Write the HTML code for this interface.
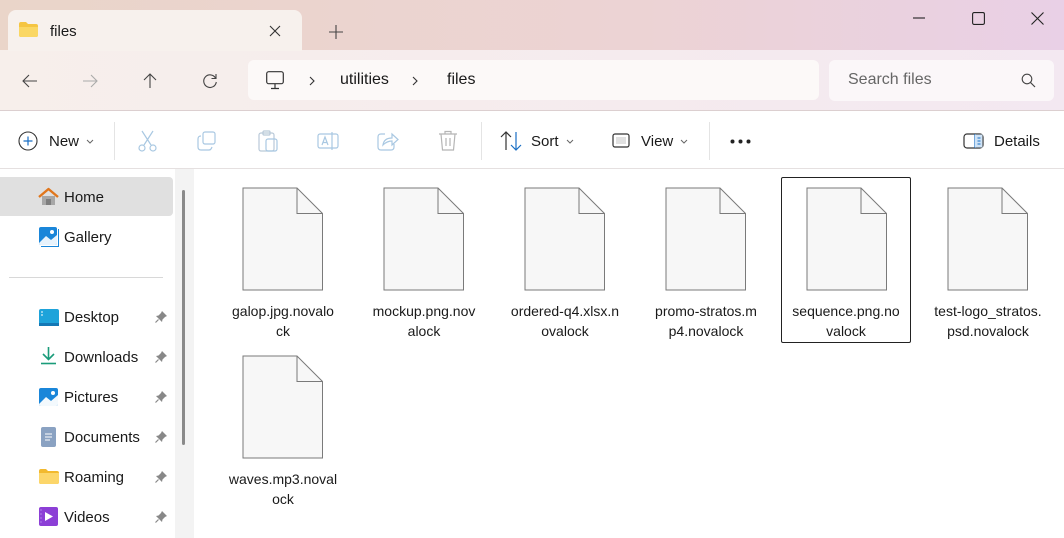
<!DOCTYPE html>
<html><head><meta charset="utf-8"><style>
*{margin:0;padding:0;box-sizing:border-box}
body{width:1064px;height:538px;overflow:hidden;font-family:"Segoe UI","Liberation Sans",sans-serif;position:relative;background:#fff;color:#1a1a1a}
.top{position:absolute;left:0;top:0;width:1064px;height:111px;background:linear-gradient(90deg,#ead5c9 0%,#ecd3d4 60%,#e9d0e6 100%)}
.addrrow{position:absolute;left:0;top:50px;width:1064px;height:61px;background:linear-gradient(90deg,#f7efeb 0%,#f5ebee 60%,#f3e8f1 100%);border-bottom:1px solid #dccfd0}
.tab{position:absolute;left:8px;top:10px;width:294px;height:41px;background:#f7f1ed;border-radius:8px 8px 0 0}
.abs{position:absolute}
.t{position:absolute;white-space:nowrap}
.toolbar{position:absolute;left:0;top:111px;width:1064px;height:58px;background:#fff;border-bottom:1px solid #e5e0e0}
.sep{position:absolute;top:122px;width:1px;height:38px;background:#e4e4e4}
.side{position:absolute;left:0;top:169px;width:175px;height:369px;background:#fff}
.sbar{position:absolute;left:175px;top:169px;width:19px;height:369px;background:#f3f3f3}
.item{position:absolute;width:130px;height:166px;text-align:center;font-size:14px;line-height:20px;color:#1a1a1a}
.item svg{position:absolute;left:24px;top:10px}
.item .lbl{position:absolute;top:124px;left:0;width:130px}
.nav{position:absolute;left:38px;font-size:15px;color:#1a1a1a}
.pin{position:absolute;left:155px;width:12px;height:12px}
</style></head><body>
<div class="top"></div>
<div class="addrrow"></div>
<div class="tab"></div>
<svg class="abs" style="left:19px;top:22px" width="19" height="15"><path d="M0 2 Q0 0 2 0 H7 L9 2 H17 Q19 2 19 4 V13 Q19 15 17 15 H2 Q0 15 0 13Z" fill="#f5c542"/><path d="M0 5 H19 V13 Q19 15 17 15 H2 Q0 15 0 13Z" fill="#fad764"/></svg>
<div class="t" style="left:50px;top:23px;font-size:15px">files</div>
<svg class="abs" style="left:269px;top:25px" width="12" height="12"><path d="M1 1L11 11M11 1L1 11" stroke="#333" stroke-width="1.1"/></svg>
<svg class="abs" style="left:329px;top:25px" width="14" height="14"><path d="M7 0V14M0 7H14" stroke="#444" stroke-width="1.1"/></svg>
<svg class="abs" style="left:913px;top:17px" width="12" height="2"><path d="M0 1H12" stroke="#222" stroke-width="1.1"/></svg>
<svg class="abs" style="left:972px;top:12px" width="13" height="13"><rect x="0.6" y="0.6" width="11.8" height="11.8" rx="1.5" fill="none" stroke="#222" stroke-width="1.1"/></svg>
<svg class="abs" style="left:1031px;top:12px" width="13" height="13"><path d="M0.5 0.5L12.5 12.5M12.5 0.5L0.5 12.5" stroke="#222" stroke-width="1.1"/></svg>
<svg class="abs" style="left:22px;top:73px" width="16" height="16"><path d="M15 8H1M7 2L1 8L7 14" stroke="#444" stroke-width="1.1" fill="none"/></svg>
<svg class="abs" style="left:82px;top:73px" width="16" height="16"><path d="M1 8H15M9 2L15 8L9 14" stroke="#aaa" stroke-width="1.1" fill="none"/></svg>
<svg class="abs" style="left:142px;top:73px" width="16" height="16"><path d="M8 15V1M2 7L8 1L14 7" stroke="#444" stroke-width="1.1" fill="none"/></svg>
<svg class="abs" style="left:202px;top:73px" width="16" height="16"><path d="M13.5 5A6.3 6.3 0 1 0 14.3 9" stroke="#444" stroke-width="1.1" fill="none"/><path d="M14 1V5.5H9.5" stroke="#444" stroke-width="1.1" fill="none"/></svg>
<div class="abs" style="left:248px;top:60px;width:571px;height:40px;background:#fcf9f8;border-radius:6px"></div>
<svg class="abs" style="left:266px;top:71px" width="18" height="19"><rect x="0.7" y="0.7" width="16.6" height="12" rx="2" fill="none" stroke="#333" stroke-width="1.2"/><path d="M9 13V17M5 17.5H13" stroke="#333" stroke-width="1.2"/></svg>
<svg class="abs" style="left:309px;top:76px" width="6" height="10"><path d="M1 1L5 5L1 9" stroke="#333" stroke-width="1.1" fill="none"/></svg>
<div class="t" style="left:340px;top:71px;font-size:16px">utilities</div>
<svg class="abs" style="left:412px;top:76px" width="6" height="10"><path d="M1 1L5 5L1 9" stroke="#333" stroke-width="1.1" fill="none"/></svg>
<div class="t" style="left:447px;top:71px;font-size:16px">files</div>
<div class="abs" style="left:829px;top:60px;width:225px;height:41px;background:#fbf7f9;border-radius:6px"></div>
<div class="t" style="left:848px;top:71px;font-size:16px;color:#666">Search files</div>
<svg class="abs" style="left:1021px;top:73px" width="15" height="15"><circle cx="6" cy="6" r="4.8" fill="none" stroke="#444" stroke-width="1.1"/><path d="M9.5 9.5L14 14" stroke="#444" stroke-width="1.2"/></svg>
<div class="toolbar"></div>
<svg class="abs" style="left:18px;top:131px" width="20" height="20"><circle cx="10" cy="10" r="9" fill="none" stroke="#333" stroke-width="1.1"/><path d="M10 5.5V14.5M5.5 10H14.5" stroke="#1a6fc4" stroke-width="1.2"/></svg>
<div class="t" style="left:49px;top:133px;font-size:15px">New</div>
<svg class="abs" style="left:86px;top:139px" width="8" height="5"><path d="M1 1L4 4L7 1" stroke="#666" fill="none"/></svg>
<div class="sep" style="left:114px"></div>
<svg class="abs" style="left:137px;top:130px" width="22" height="22" fill="none" stroke="#a9c8e2" stroke-width="1.2"><path d="M5 1L14 15M16 1L7 15"/><circle cx="5" cy="18" r="3"/><circle cx="16" cy="18" r="3"/></svg>
<svg class="abs" style="left:197px;top:131px" width="20" height="20" fill="none" stroke="#a9c8e2" stroke-width="1.2"><rect x="6" y="1" width="12" height="12" rx="2"/><path d="M4 5Q1 5 1 8V16Q1 19 4 19H12Q14 19 15 16"/></svg>
<svg class="abs" style="left:258px;top:130px" width="20" height="22" fill="none" stroke="#b9c9d8" stroke-width="1.2"><rect x="1" y="3" width="15" height="18" rx="2"/><rect x="5" y="1" width="7" height="4" rx="1"/><rect x="8" y="9" width="11" height="12" rx="2" stroke="#a9c8e2"/></svg>
<svg class="abs" style="left:317px;top:130px" width="22" height="22" fill="none" stroke="#a9c8e2" stroke-width="1.2"><rect x="1" y="4" width="20" height="14" rx="2"/><path d="M5 15L8 7L11 15M6 12.5H10M15 2V20"/></svg>
<svg class="abs" style="left:377px;top:131px" width="22" height="20" fill="none" stroke="#a9c8e2" stroke-width="1.2"><path d="M8 3H4Q1 3 1 6V16Q1 19 4 19H14Q17 19 17 16V13"/><path d="M6 14Q7 7 15 7V3L21 8.5L15 14V10Q10 10 6 14Z"/></svg>
<svg class="abs" style="left:438px;top:130px" width="20" height="22" fill="none" stroke="#b5b5b5" stroke-width="1.2"><path d="M1 4H19M7 4V1.5H13V4M3 4L4.5 20H15.5L17 4M8 8V16M12 8V16"/></svg>
<div class="sep" style="left:481px"></div>
<svg class="abs" style="left:500px;top:131px" width="22" height="20" fill="none" stroke-width="1.2"><path d="M6 19V1M1 6L6 1L11 6" stroke="#333"/><path d="M16 1V19M11 14L16 19L21 14" stroke="#1a6fc4"/></svg>
<div class="t" style="left:531px;top:133px;font-size:15px">Sort</div>
<svg class="abs" style="left:566px;top:139px" width="8" height="5"><path d="M1 1L4 4L7 1" stroke="#666" fill="none"/></svg>
<svg class="abs" style="left:612px;top:133px" width="18" height="16" fill="none" stroke="#333" stroke-width="1.2"><rect x="1" y="1" width="16" height="13" rx="2"/><rect x="4" y="4" width="10" height="7" fill="#333" stroke="none" opacity=".15"/></svg>
<div class="t" style="left:641px;top:133px;font-size:15px">View</div>
<svg class="abs" style="left:680px;top:139px" width="8" height="5"><path d="M1 1L4 4L7 1" stroke="#666" fill="none"/></svg>
<div class="sep" style="left:709px"></div>
<svg class="abs" style="left:730px;top:139px" width="22" height="5"><circle cx="2.5" cy="2.5" r="2" fill="#222"/><circle cx="10.5" cy="2.5" r="2" fill="#222"/><circle cx="18.5" cy="2.5" r="2" fill="#222"/></svg>
<svg class="abs" style="left:963px;top:133px" width="22" height="16" fill="none" stroke-width="1.2"><rect x="1" y="1" width="19" height="14" rx="3" stroke="#333"/><path d="M12 1V15" stroke="#1a6fc4"/><rect x="12" y="1.5" width="7.5" height="13" fill="#cfe3f6" stroke="none"/><path d="M14.5 5H17.5M14.5 8H17.5M14.5 11H17.5" stroke="#1a6fc4" stroke-width="1"/></svg>
<div class="t" style="left:994px;top:133px;font-size:15px">Details</div>
<div class="side"></div>
<div class="sbar"></div>
<div class="abs" style="left:182px;top:190px;width:3px;height:255px;background:#8a8a8a;border-radius:2px"></div>
<div class="abs" style="left:0;top:177px;width:173px;height:39px;background:#e0e0e0;border-radius:0 4px 4px 0"></div>
<svg class="abs" style="left:38px;top:187px" width="21" height="19"><path d="M4 9V18H17V9" fill="#a7a7a7"/><path d="M8 18V12H13V18" fill="#7e7e7e"/><path d="M1 10L10.5 2L20 10" stroke="#e0761c" stroke-width="2.4" fill="none" stroke-linejoin="round"/></svg>
<div class="nav" style="top:189px;left:64px">Home</div>
<svg class="abs" style="left:39px;top:227px" width="20" height="20"><rect x="0" y="0" width="18" height="18" rx="2" fill="#1a86d9"/><path d="M0 16L7 9L12 13L18 8V16Q18 18 16 18H2Q0 18 0 16Z" fill="#fff" opacity=".9"/><circle cx="13" cy="5" r="2" fill="#fff"/><path d="M2 19.5H19.5V2" stroke="#1a86d9" fill="none"/></svg>
<div class="nav" style="top:229px;left:64px">Gallery</div>
<div class="abs" style="left:9px;top:277px;width:154px;height:1px;background:#d8d8d8"></div>
<svg class="abs" style="left:39px;top:309px" width="20" height="17"><rect width="20" height="17" rx="2" fill="#1ea3da"/><rect x="0" y="14" width="20" height="3" fill="#1478b5"/><path d="M2 3H4M2 6H4" stroke="#fff"/></svg>
<div class="nav" style="top:309px;left:64px">Desktop</div>
<svg class="abs" style="left:40px;top:347px" width="17" height="18"><path d="M8.5 0V12M3 7L8.5 12.5L14 7" stroke="#1a9c7a" stroke-width="1.6" fill="none"/><path d="M1 16.5H16" stroke="#1a9c7a" stroke-width="1.6"/></svg>
<div class="nav" style="top:349px;left:64px">Downloads</div>
<svg class="abs" style="left:39px;top:388px" width="19" height="18"><rect width="19" height="18" rx="2" fill="#1a86d9"/><path d="M0 16L7 9L12 13L19 7V16Q19 18 17 18H2Q0 18 0 16Z" fill="#fff" opacity=".95"/><circle cx="14" cy="5" r="2" fill="#fff"/></svg>
<div class="nav" style="top:389px;left:64px">Pictures</div>
<svg class="abs" style="left:41px;top:427px" width="15" height="20"><rect width="15" height="20" rx="2" fill="#8aa2c2"/><path d="M4 7H11M4 10H11M4 13H9" stroke="#fff"/></svg>
<div class="nav" style="top:429px;left:64px">Documents</div>
<svg class="abs" style="left:39px;top:469px" width="20" height="15"><path d="M0 2Q0 0 2 0H7L9 2H18Q20 2 20 4V13Q20 15 18 15H2Q0 15 0 13Z" fill="#f2b92e"/><path d="M0 4H20V13Q20 15 18 15H2Q0 15 0 13Z" fill="#fcd66a"/></svg>
<div class="nav" style="top:469px;left:64px">Roaming</div>
<svg class="abs" style="left:39px;top:507px" width="19" height="19"><rect width="19" height="19" rx="2" fill="#8c3fd6"/><path d="M6 5V14L14 9.5Z" fill="#fff"/><path d="M2 2V17" stroke="#b07de8" stroke-dasharray="2 2"/></svg>
<div class="nav" style="top:509px;left:64px">Videos</div>
<svg class="pin" style="top:311px" viewBox="0 0 12 12"><path d="M7 0L12 5L10 6L7.5 8.5L7 11L1 5L3.5 4.5L6 2Z" fill="#888"/><path d="M3.5 8.5L0.5 11.5" stroke="#888" stroke-width="1.2"/></svg>
<svg class="pin" style="top:351px" viewBox="0 0 12 12"><path d="M7 0L12 5L10 6L7.5 8.5L7 11L1 5L3.5 4.5L6 2Z" fill="#888"/><path d="M3.5 8.5L0.5 11.5" stroke="#888" stroke-width="1.2"/></svg>
<svg class="pin" style="top:391px" viewBox="0 0 12 12"><path d="M7 0L12 5L10 6L7.5 8.5L7 11L1 5L3.5 4.5L6 2Z" fill="#888"/><path d="M3.5 8.5L0.5 11.5" stroke="#888" stroke-width="1.2"/></svg>
<svg class="pin" style="top:431px" viewBox="0 0 12 12"><path d="M7 0L12 5L10 6L7.5 8.5L7 11L1 5L3.5 4.5L6 2Z" fill="#888"/><path d="M3.5 8.5L0.5 11.5" stroke="#888" stroke-width="1.2"/></svg>
<svg class="pin" style="top:471px" viewBox="0 0 12 12"><path d="M7 0L12 5L10 6L7.5 8.5L7 11L1 5L3.5 4.5L6 2Z" fill="#888"/><path d="M3.5 8.5L0.5 11.5" stroke="#888" stroke-width="1.2"/></svg>
<svg class="pin" style="top:511px" viewBox="0 0 12 12"><path d="M7 0L12 5L10 6L7.5 8.5L7 11L1 5L3.5 4.5L6 2Z" fill="#888"/><path d="M3.5 8.5L0.5 11.5" stroke="#888" stroke-width="1.2"/></svg>
<div class="item" style="left:218px;top:177px"><svg width="82" height="104"><path d="M1 1H55L80.5 26.5V103H1Z" fill="#f7f7f7" stroke="#7a7a7a"/><path d="M55 1V26.5H80.5" fill="none" stroke="#7a7a7a"/></svg><div class="lbl">galop.jpg.novalo<br>ck</div></div>
<div class="item" style="left:359px;top:177px"><svg width="82" height="104"><path d="M1 1H55L80.5 26.5V103H1Z" fill="#f7f7f7" stroke="#7a7a7a"/><path d="M55 1V26.5H80.5" fill="none" stroke="#7a7a7a"/></svg><div class="lbl">mockup.png.nov<br>alock</div></div>
<div class="item" style="left:500px;top:177px"><svg width="82" height="104"><path d="M1 1H55L80.5 26.5V103H1Z" fill="#f7f7f7" stroke="#7a7a7a"/><path d="M55 1V26.5H80.5" fill="none" stroke="#7a7a7a"/></svg><div class="lbl">ordered-q4.xlsx.n<br>ovalock</div></div>
<div class="item" style="left:641px;top:177px"><svg width="82" height="104"><path d="M1 1H55L80.5 26.5V103H1Z" fill="#f7f7f7" stroke="#7a7a7a"/><path d="M55 1V26.5H80.5" fill="none" stroke="#7a7a7a"/></svg><div class="lbl">promo-stratos.m<br>p4.novalock</div></div>
<div class="item" style="left:781px;top:177px;border:1px solid #222;border-radius:2px"><svg width="82" height="104" style="left:24px;top:9px"><path d="M1 1H55L80.5 26.5V103H1Z" fill="#f7f7f7" stroke="#7a7a7a"/><path d="M55 1V26.5H80.5" fill="none" stroke="#7a7a7a"/></svg><div class="lbl" style="top:123px;left:-1px">sequence.png.no<br>valock</div></div>
<div class="item" style="left:923px;top:177px"><svg width="82" height="104"><path d="M1 1H55L80.5 26.5V103H1Z" fill="#f7f7f7" stroke="#7a7a7a"/><path d="M55 1V26.5H80.5" fill="none" stroke="#7a7a7a"/></svg><div class="lbl">test-logo_stratos.<br>psd.novalock</div></div>
<div class="item" style="left:218px;top:345px"><svg width="82" height="104"><path d="M1 1H55L80.5 26.5V103H1Z" fill="#f7f7f7" stroke="#7a7a7a"/><path d="M55 1V26.5H80.5" fill="none" stroke="#7a7a7a"/></svg><div class="lbl">waves.mp3.noval<br>ock</div></div>
</body></html>
